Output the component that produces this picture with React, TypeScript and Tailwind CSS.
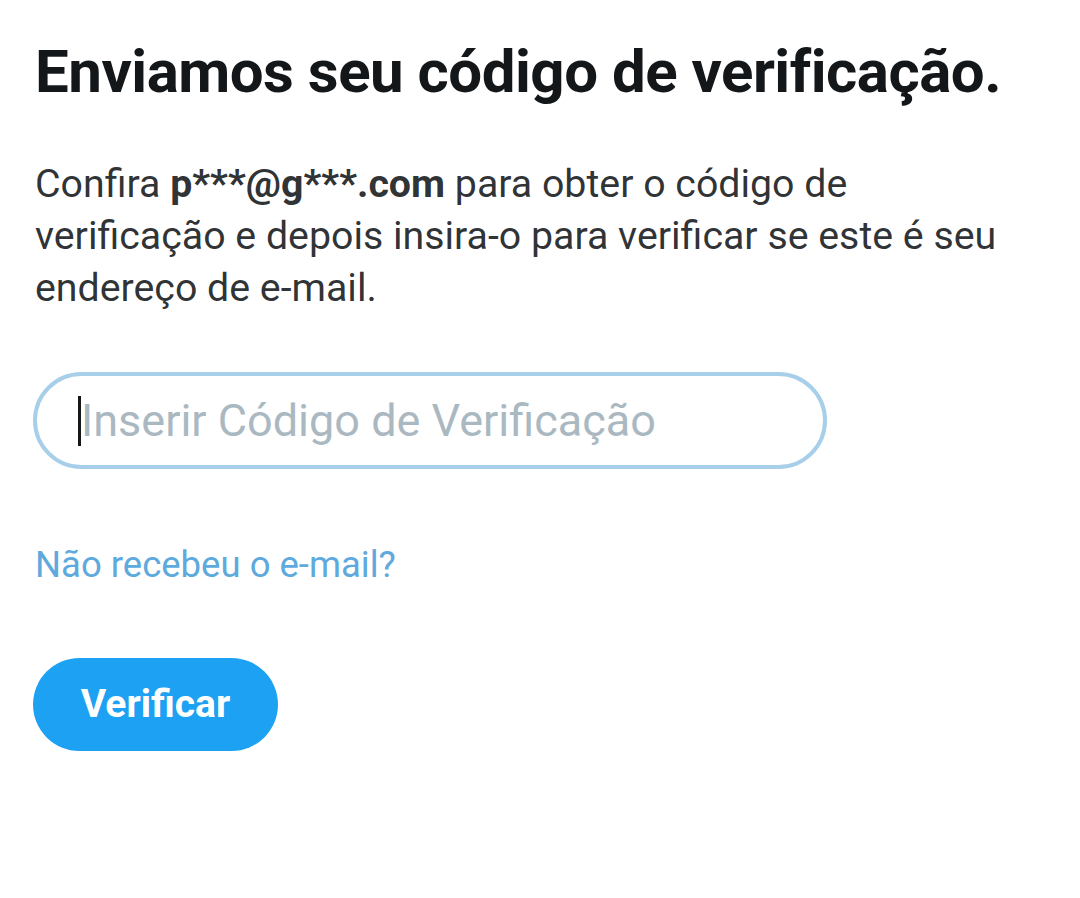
export default function App() {
  return (
    <main className="min-h-[898px] w-[1080px] bg-white font-['Roboto',sans-serif]">
      <div className="px-[35px] pt-[37px]">
        <h1 className="text-[60px] font-bold leading-[70px] tracking-[-0.5px] text-[#14171a]">
          Enviamos seu código de verificação.
        </h1>

        <p className="mt-[51px] w-[975px] text-[39.3px] leading-[52px] text-[#14171a]/90">
          Confira <span className="font-bold">p***@g***.com</span> para obter o código de verificação e depois
          insira-o para verificar se este é seu endereço de e-mail.
        </p>

        <div className="-ml-[2px] mt-[58px] flex h-[97px] w-[794px] items-center rounded-full border-[4px] border-[#a8cfe9] pl-[41px]">
          <span className="h-[50px] w-[3px] bg-[#14171a]" />
          <span className="text-[45px] text-[#aab8c2]">Inserir Código de Verificação</span>
        </div>

        <a href="#" className="mt-[71px] block text-[36.5px] leading-[50px] text-[#5ea9dd]">
          Não recebeu o e-mail?
        </a>

        <button className="-ml-[2px] mt-[68px] flex h-[93px] w-[245px] items-center justify-center rounded-full bg-[#1da1f2] text-[39px] font-bold text-white">
          Verificar
        </button>
      </div>
    </main>
  );
}
